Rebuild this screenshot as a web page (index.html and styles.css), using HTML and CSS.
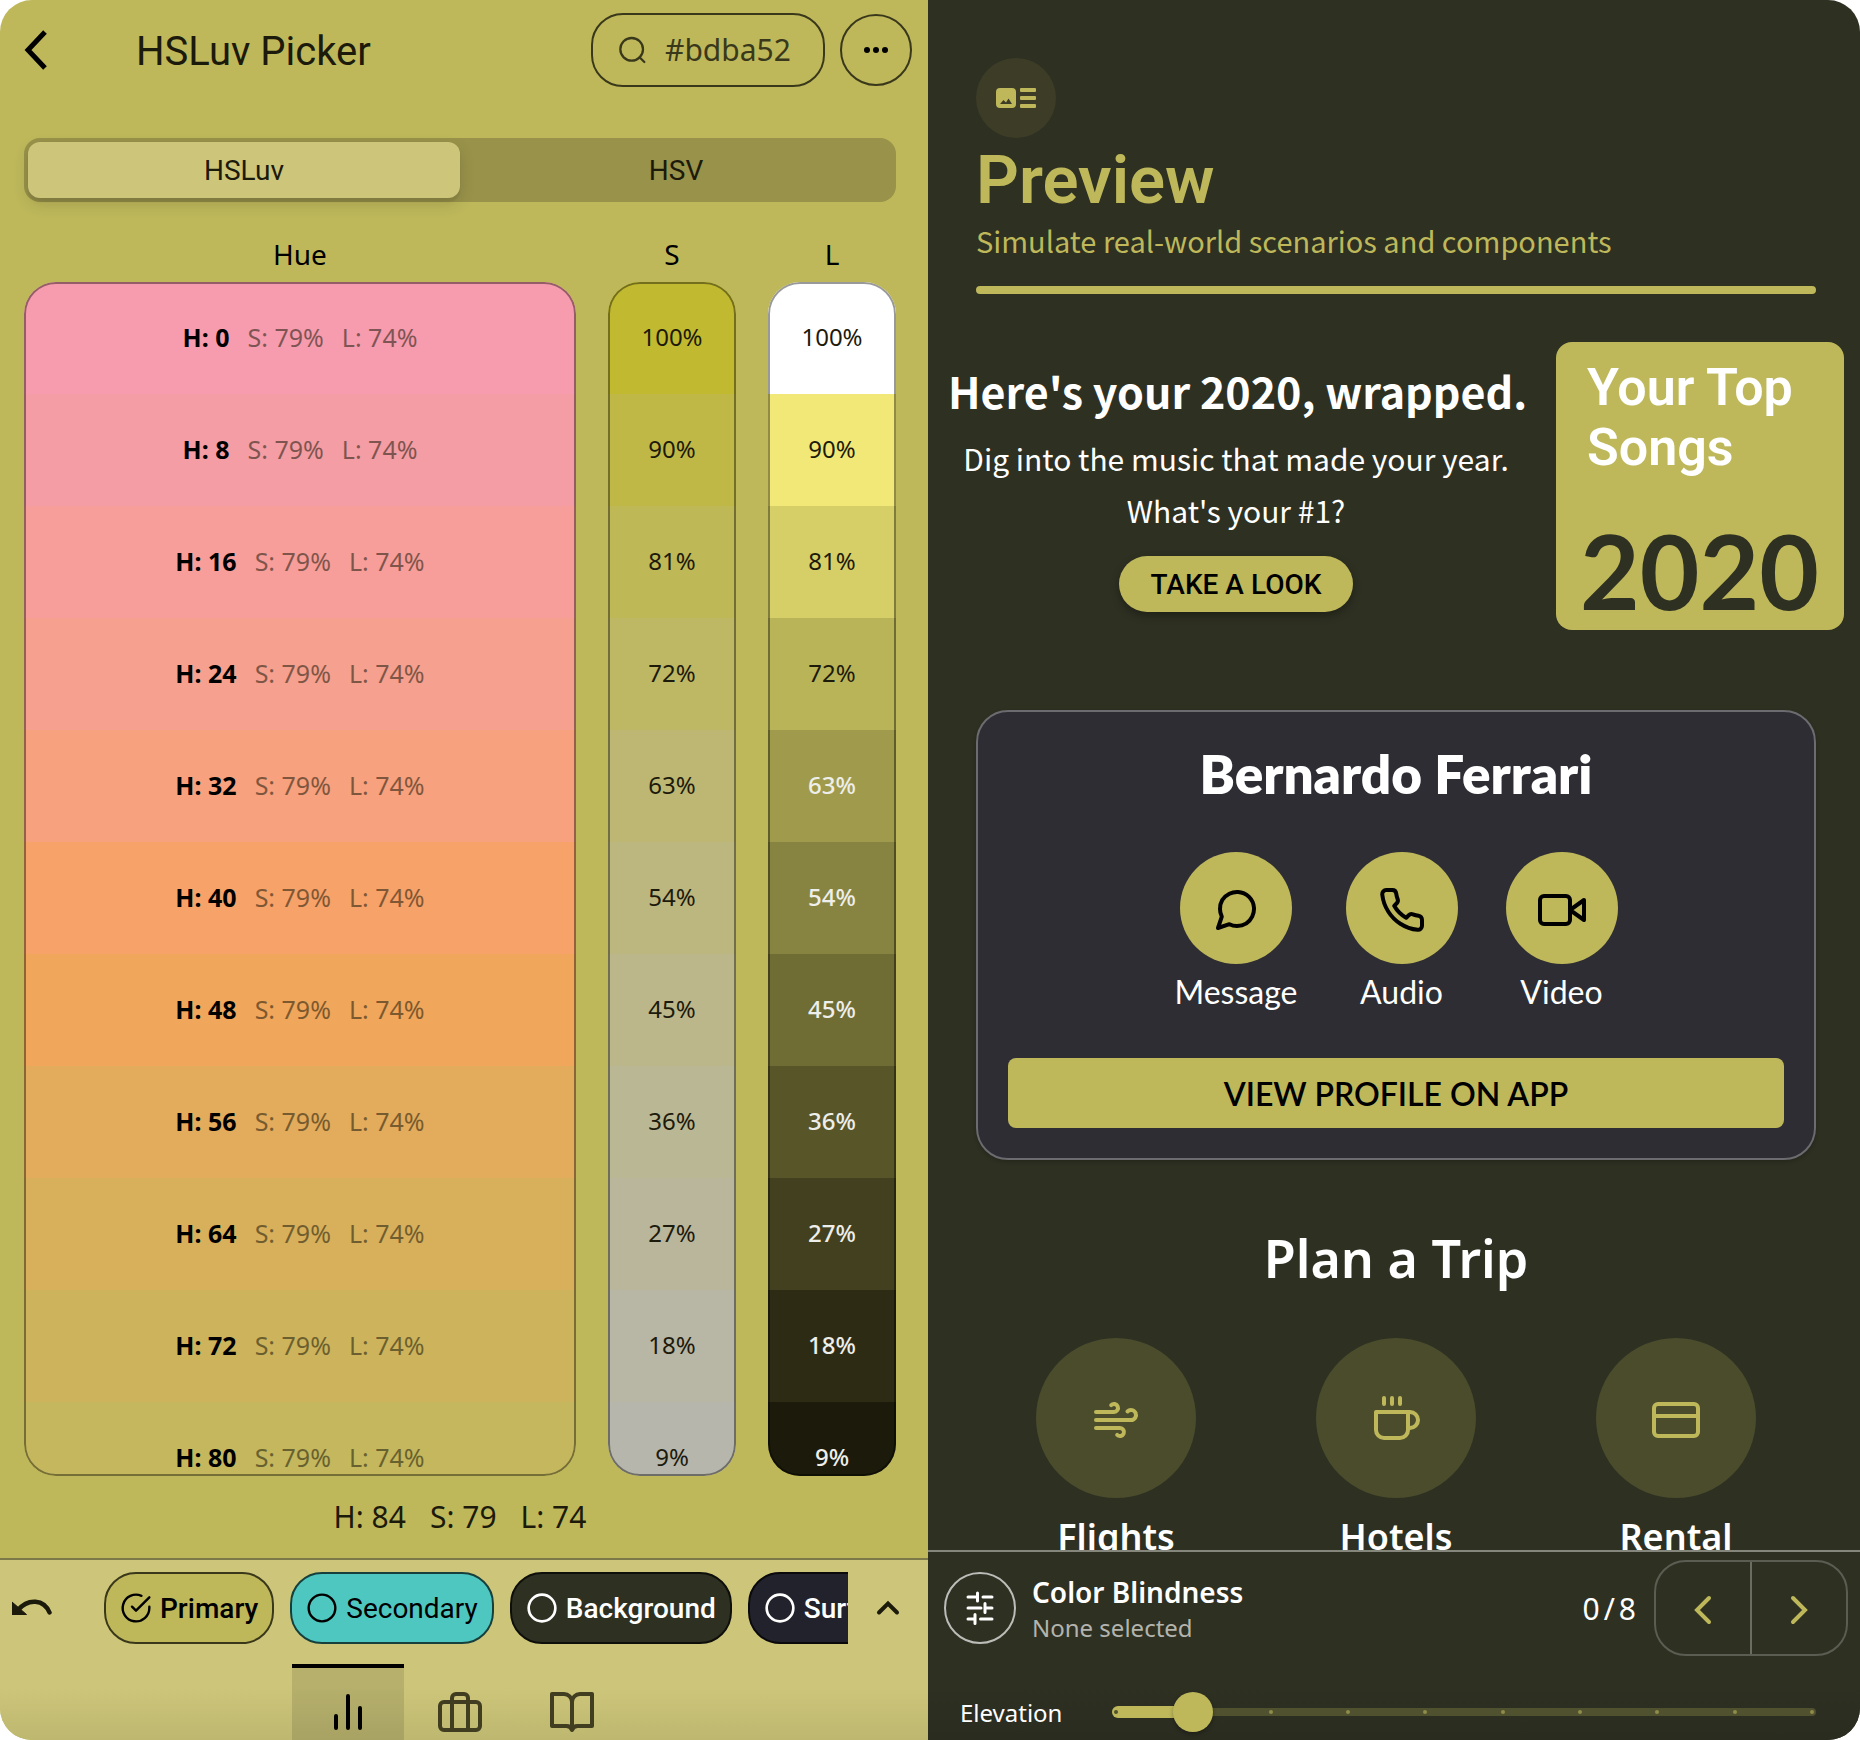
FILE: index.html
```html
<!DOCTYPE html>
<html lang="en">
<head>
<meta charset="utf-8">
<meta name="viewport" content="width=device-width, initial-scale=1">
<title>HSLuv Picker</title>
<link rel="stylesheet" href="styles.css">
</head>
<body>
<div class="app">
  <main class="picker">
    <header class="topbar">
      <button class="icon-btn back" aria-label="Back">
        <svg width="24" height="40" viewBox="0 0 24 40" fill="none" stroke="#000" stroke-width="5"><path d="M21 2 4 20l17 18"/></svg>
      </button>
      <h1 class="topbar-title">HSLuv Picker</h1>
      <label class="search">
        <svg width="32" height="32" viewBox="0 0 24 24" fill="none" stroke="currentColor" stroke-width="1.7" stroke-linecap="round"><circle cx="11" cy="11.500" r="8.500"/><path d="m20.500 21-3.600-3.600"/></svg>
        <input class="search-input" type="text" value="#bdba52" aria-label="Hex color">
      </label>
      <button class="more" aria-label="More options">
        <svg width="28" height="8" viewBox="0 0 28 8"><circle cx="5" cy="4" r="3"/><circle cx="14" cy="4" r="3"/><circle cx="23" cy="4" r="3"/></svg>
      </button>
    </header>

    <div class="segmented" role="tablist">
      <button class="segment is-active" role="tab" aria-selected="true">HSLuv</button>
      <button class="segment" role="tab" aria-selected="false">HSV</button>
    </div>

    <div class="sliders sliders-head">
      <h2 class="col-title">Hue</h2>
      <h2 class="col-title">S</h2>
      <h2 class="col-title">L</h2>
    </div>

    <div class="sliders sliders-body">
      <div class="swatches hue">
        <button class="swatch h0"><b>H: 0</b><span>S: 79%</span><span>L: 74%</span></button>
        <button class="swatch h8"><b>H: 8</b><span>S: 79%</span><span>L: 74%</span></button>
        <button class="swatch h16"><b>H: 16</b><span>S: 79%</span><span>L: 74%</span></button>
        <button class="swatch h24"><b>H: 24</b><span>S: 79%</span><span>L: 74%</span></button>
        <button class="swatch h32"><b>H: 32</b><span>S: 79%</span><span>L: 74%</span></button>
        <button class="swatch h40"><b>H: 40</b><span>S: 79%</span><span>L: 74%</span></button>
        <button class="swatch h48"><b>H: 48</b><span>S: 79%</span><span>L: 74%</span></button>
        <button class="swatch h56"><b>H: 56</b><span>S: 79%</span><span>L: 74%</span></button>
        <button class="swatch h64"><b>H: 64</b><span>S: 79%</span><span>L: 74%</span></button>
        <button class="swatch h72"><b>H: 72</b><span>S: 79%</span><span>L: 74%</span></button>
        <button class="swatch h80"><b>H: 80</b><span>S: 79%</span><span>L: 74%</span></button>
      </div>
      <div class="swatches">
        <button class="swatch s100">100%</button>
        <button class="swatch s90">90%</button>
        <button class="swatch s81">81%</button>
        <button class="swatch s72">72%</button>
        <button class="swatch s63">63%</button>
        <button class="swatch s54">54%</button>
        <button class="swatch s45">45%</button>
        <button class="swatch s36">36%</button>
        <button class="swatch s27">27%</button>
        <button class="swatch s18">18%</button>
        <button class="swatch s9">9%</button>
      </div>
      <div class="swatches">
        <button class="swatch l100">100%</button>
        <button class="swatch l90">90%</button>
        <button class="swatch l81">81%</button>
        <button class="swatch l72">72%</button>
        <button class="swatch on-dark l63">63%</button>
        <button class="swatch on-dark l54">54%</button>
        <button class="swatch on-dark l45">45%</button>
        <button class="swatch on-dark l36">36%</button>
        <button class="swatch on-dark l27">27%</button>
        <button class="swatch on-dark l18">18%</button>
        <button class="swatch on-dark l9">9%</button>
      </div>
    </div>

    <p class="readout"><span>H: 84</span><span>S: 79</span><span>L: 74</span></p>

    <footer class="dock">
      <div class="dock-row">
        <button class="icon-btn undo" aria-label="Undo">
          <svg width="40" height="18" viewBox="0 0 40 18"><path d="M0 3v12.500h14.500z" fill="#1c1a0b" stroke="#1c1a0b" stroke-linejoin="round"/><path d="M6 11C16-1 32 0 37.500 13.500" fill="none" stroke="#1c1a0b" stroke-width="4.500" stroke-linecap="round"/></svg>
        </button>
        <div class="chips">
          <button class="chip chip-primary" aria-pressed="true">
            <svg width="32" height="32" viewBox="0 0 24 24" fill="none" stroke="currentColor" stroke-width="1.800" stroke-linecap="round" stroke-linejoin="round"><path d="M22 11.100V12a10 10 0 1 1-5.900-9.100"/><path d="M22 4 12 14l-3-3"/></svg>
            Primary</button>
          <button class="chip chip-secondary">
            <svg width="32" height="32" viewBox="0 0 24 24" fill="none" stroke="currentColor" stroke-width="1.800"><circle cx="12" cy="12" r="10"/></svg>
            Secondary</button>
          <button class="chip chip-background">
            <svg width="32" height="32" viewBox="0 0 24 24" fill="none" stroke="currentColor" stroke-width="2"><circle cx="12" cy="12" r="10"/></svg>
            Background</button>
          <button class="chip chip-surface">
            <svg width="32" height="32" viewBox="0 0 24 24" fill="none" stroke="currentColor" stroke-width="2"><circle cx="12" cy="12" r="10"/></svg>
            Surface</button>
        </div>
        <button class="icon-btn expand" aria-label="Expand">
          <svg width="24" height="16" viewBox="0 0 24 16" fill="none" stroke="#1c1a0b" stroke-width="4" stroke-linecap="round" stroke-linejoin="miter"><path d="m3 12.500 9-9 9 9"/></svg>
        </button>
      </div>
      <nav class="tabs">
        <button class="tab is-active" aria-label="Picker">
          <svg width="48" height="48" viewBox="0 0 48 48" fill="none" stroke="#000" stroke-width="4" stroke-linecap="round"><path d="M12 28v12M24 8v32M36 20v20"/></svg>
        </button>
        <button class="tab" aria-label="Collection">
          <svg width="48" height="48" viewBox="0 0 48 48" fill="none" stroke="currentColor" stroke-width="4" stroke-linejoin="round"><rect x="4" y="14" width="40" height="28" rx="4"/><path d="M16 42V10a4 4 0 0 1 4-4h8a4 4 0 0 1 4 4v32"/></svg>
        </button>
        <button class="tab" aria-label="Guide">
          <svg width="48" height="48" viewBox="0 0 24 24" fill="none" stroke="currentColor" stroke-width="2" stroke-linecap="round" stroke-linejoin="round"><path d="M2 3h6a4 4 0 0 1 4 4v14a3 3 0 0 0-3-2H2zM22 3h-6a4 4 0 0 0-4 4v14a3 3 0 0 1 3-2h7z"/></svg>
        </button>
      </nav>
    </footer>
  </main>

  <section class="preview">
    <div class="preview-scroll">
      <header class="preview-head">
        <div class="badge">
          <svg width="40" height="20" viewBox="0 0 40 20" fill="#beb85b"><path fill-rule="evenodd" d="M4 0h12a4 4 0 0 1 4 4v12a4 4 0 0 1-4 4H4a4 4 0 0 1-4-4V4a4 4 0 0 1 4-4zm0 16h12l-3.500-5.500-2.500 4-2.500-2.500z"/><rect x="24" width="16" height="4" rx="1"/><rect x="24" y="8" width="16" height="4" rx="1"/><rect x="24" y="16" width="16" height="4" rx="1"/></svg>
        </div>
        <h2 class="preview-title">Preview</h2>
        <p class="preview-sub">Simulate real-world scenarios and components</p>
      </header>

      <article class="wrapped">
        <div class="wrapped-text">
          <h3 class="wrapped-title">Here's your 2020, wrapped.</h3>
          <p class="wrapped-copy">Dig into the music that made your year.<br>What's your #1?</p>
          <button class="pill">TAKE A LOOK</button>
        </div>
        <div class="cover">
          <p class="cover-title">Your Top Songs</p>
          <p class="cover-year">2020</p>
        </div>
      </article>

      <article class="profile">
        <h3 class="profile-name">Bernardo Ferrari</h3>
        <div class="contacts">
          <button class="contact"><span class="contact-icon"><svg width="48" height="48" viewBox="0 0 24 24" fill="none" stroke="#000" stroke-width="2" stroke-linecap="round" stroke-linejoin="round"><path d="M21 11.500a8.380 8.380 0 0 1-.9 3.800 8.500 8.500 0 0 1-7.600 4.700 8.380 8.380 0 0 1-3.800-.9L3 21l1.900-5.700a8.380 8.380 0 0 1-.9-3.800 8.500 8.500 0 0 1 4.700-7.600 8.380 8.380 0 0 1 3.800-.9h.5a8.480 8.480 0 0 1 8 8z"/></svg></span>Message</button>
          <button class="contact"><span class="contact-icon"><svg width="48" height="48" viewBox="0 0 24 24" fill="none" stroke="#000" stroke-width="2" stroke-linecap="round" stroke-linejoin="round"><path d="M22 16.920v3a2 2 0 0 1-2.180 2 19.790 19.790 0 0 1-8.630-3.070 19.500 19.500 0 0 1-6-6 19.790 19.790 0 0 1-3.070-8.670A2 2 0 0 1 4.110 2h3a2 2 0 0 1 2 1.720 12.840 12.840 0 0 0 .7 2.810 2 2 0 0 1-.45 2.110L8.090 9.910a16 16 0 0 0 6 6l1.270-1.270a2 2 0 0 1 2.110-.45 12.840 12.840 0 0 0 2.810.7A2 2 0 0 1 22 16.920z"/></svg></span>Audio</button>
          <button class="contact"><span class="contact-icon"><svg width="48" height="48" viewBox="0 0 24 24" fill="none" stroke="#000" stroke-width="2" stroke-linecap="round" stroke-linejoin="round"><path d="m23 7-7 5 7 5z"/><rect x="1" y="5" width="15" height="14" rx="2"/></svg></span>Video</button>
        </div>
        <button class="profile-btn">VIEW PROFILE ON APP</button>
      </article>

      <article class="trip">
        <h3 class="trip-title">Plan a Trip</h3>
        <div class="trip-grid">
          <button class="trip-item"><span class="trip-icon"><svg width="48" height="48" viewBox="0 0 24 24" fill="none" stroke="currentColor" stroke-width="2" stroke-linecap="round" stroke-linejoin="round"><path d="M9.590 4.590A2 2 0 1 1 11 8H2m10.590 11.410A2 2 0 1 0 14 16H2m15.730-8.270A2.500 2.500 0 1 1 19.500 12H2"/></svg></span>Flights</button>
          <button class="trip-item"><span class="trip-icon"><svg width="48" height="48" viewBox="0 0 24 24" fill="none" stroke="currentColor" stroke-width="2" stroke-linecap="round" stroke-linejoin="round"><path d="M18 8h1a4 4 0 0 1 0 8h-1M2 8h16v9a4 4 0 0 1-4 4H6a4 4 0 0 1-4-4zM6 1v3M10 1v3M14 1v3"/></svg></span>Hotels</button>
          <button class="trip-item"><span class="trip-icon"><svg width="48" height="48" viewBox="0 0 24 24" fill="none" stroke="currentColor" stroke-width="2" stroke-linecap="round" stroke-linejoin="round"><rect x="1" y="4" width="22" height="16" rx="2"/><path d="M1 10h22"/></svg></span>Rental</button>
        </div>
      </article>
    </div>

    <footer class="settings">
      <div class="settings-row">
        <button class="tune" aria-label="Color blindness options">
          <svg width="28" height="34" viewBox="0 0 28 34" fill="none" stroke="#fff" stroke-width="3" stroke-linecap="round"><path d="M2 6h8M17 6h9M11.500 2v8M2 17h13M20 17h6M19 12.500v9M2 28h7M14.500 28H26M9 23.500v9"/></svg>
        </button>
        <div class="settings-text">
          <h3 class="settings-title">Color Blindness</h3>
          <p class="settings-sub">None selected</p>
        </div>
        <p class="count"><span>0</span><span>/</span><span>8</span></p>
        <div class="stepper">
          <button class="step" aria-label="Previous"><svg width="20" height="32" viewBox="0 0 20 32" fill="none" stroke="currentColor" stroke-width="4" stroke-linecap="round"><path d="M16 4 4 16l12 12"/></svg></button>
          <button class="step" aria-label="Next"><svg width="20" height="32" viewBox="0 0 20 32" fill="none" stroke="currentColor" stroke-width="4" stroke-linecap="round"><path d="m4 4 12 12L4 28"/></svg></button>
        </div>
      </div>
      <div class="elevation">
        <label class="elevation-label" for="elevation">Elevation</label>
        <div class="range">
          <div class="range-track"><i></i><i></i><i></i><i></i><i></i><i></i><i></i><i></i><i></i><i></i></div>
          <div class="range-fill"><i></i></div>
          <input class="range-input" id="elevation" type="range" min="0" max="9" value="1">
        </div>
      </div>
    </footer>
  </section>
</div>
</body>
</html>
```
FILE: styles.css
```css
:root {
  --primary: #beb85b;
  --primary-light: #cdc67a;
  --ink: #1c1a0b;
  --background: #2e3022;
  --humanist: "Noto Sans", "Open Sans", sans-serif;
  --narrow: "Noto Sans CJK JP", "Noto Sans", sans-serif;
}

* { box-sizing: border-box; }

body {
  margin: 0;
  background: #fff;
  font-family: Roboto, sans-serif;
}

h1, h2, h3, p { margin: 0; font-weight: 400; }

button {
  margin: 0;
  padding: 0;
  border: 0;
  background: none;
  color: inherit;
  font: inherit;
  cursor: pointer;
}

svg { display: block; flex: none; }

.app {
  display: grid;
  grid-template-columns: minmax(0, 928fr) minmax(0, 932fr);
  height: 100vh;
  border-radius: 32px;
  overflow: hidden;
}

/* Picker */
.picker {
  display: flex;
  flex-direction: column;
  min-height: 0;
  background: var(--primary);
  color: var(--ink);
}

.topbar {
  display: flex;
  align-items: center;
  height: 100px;
  padding: 0 16px 0 24px;
}

.icon-btn { flex: none; }
.back { width: 112px; }

.topbar-title {
  flex: 1;
  padding-top: 4px;
  font-size: 40px;
  line-height: 48px;
}

.search {
  display: flex;
  align-items: center;
  gap: 16px;
  height: 74px;
  padding: 0 30px 0 24px;
  border: 2px solid #3a381b;
  border-radius: 32px;
  color: #3a381b;
}

.search-input {
  width: 128px;
  padding: 0;
  border: 0;
  outline: 0;
  background: none;
  color: inherit;
  font: 30px/40px var(--humanist);
}

.more {
  display: grid;
  place-items: center;
  width: 72px;
  height: 72px;
  margin-left: 15px;
  border: 2px solid #3a381b;
  border-radius: 50%;
}

.segmented {
  display: grid;
  grid-template-columns: 1fr 1fr;
  height: 64px;
  margin: 38px 32px 0 24px;
  padding: 4px;
  border-radius: 16px;
  background: #98924a;
}

.segment {
  border-radius: 12px;
  font-size: 28px;
}

.segment.is-active {
  background: var(--primary-light);
  box-shadow: 0 6px 16px rgba(0, 0, 0, .14), 0 4px 2px rgba(0, 0, 0, .06);
}

.sliders {
  display: grid;
  grid-template-columns: minmax(0, 1fr) 128px 128px;
  gap: 32px;
  padding: 0 32px 0 24px;
}

.sliders-head { margin-top: 24px; }

.col-title {
  color: #000;
  font: 28px/56px var(--humanist);
  text-align: center;
}

.sliders-body {
  flex: 1;
  grid-template-rows: minmax(0, 1fr);
  min-height: 0;
}

.swatches {
  position: relative;
  display: flex;
  flex-direction: column;
  border-radius: 32px;
  overflow: hidden;
}

/* translucent outline over the swatches */
.swatches::after {
  content: "";
  position: absolute;
  inset: 0;
  border: 2px solid rgba(0, 0, 0, .4);
  border-radius: 32px;
  pointer-events: none;
}

.swatch {
  display: flex;
  flex: none;
  align-items: center;
  justify-content: center;
  gap: 18px;
  height: 112px;
  padding-bottom: 2px;
  font: 24px/32px var(--humanist);
}

.hue .swatch { font-size: 25px; }
.swatch b { color: #000; }
.swatch span { opacity: .55; }
.on-dark { color: #eeeeea; font-weight: 500; }

.h0 { background: #f79cae; }
.h8 { background: #f59da4; }
.h16 { background: #f79e9a; }
.h24 { background: #f6a08f; }
.h32 { background: #f7a17e; }
.h40 { background: #f7a269; }
.h48 { background: #f0a65b; }
.h56 { background: #e3ab5c; }
.h64 { background: #d8b05c; }
.h72 { background: #cdb45c; }
.h80 { background: #c4b75d; }

.s100 { background: #c1b92f; }
.s90 { background: #c0b846; }
.s81 { background: #beb857; }
.s72 { background: #beb865; }
.s63 { background: #bdb773; }
.s54 { background: #bcb77e; }
.s45 { background: #bbb78a; }
.s36 { background: #bab794; }
.s27 { background: #b9b69c; }
.s18 { background: #b8b6a5; }
.s9 { background: #b7b6ad; }

.l100 { background: #fff; }
.l90 { background: #f1e877; }
.l81 { background: #d6cf68; }
.l72 { background: #bab459; }
.l63 { background: #a09b4c; }
.l54 { background: #878340; }
.l45 { background: #6f6c34; }
.l36 { background: #585629; }
.l27 { background: #42401e; }
.l18 { background: #2e2b14; }
.l9 { background: #1c1a0b; }

.readout {
  display: flex;
  align-items: center;
  justify-content: center;
  gap: 24px;
  height: 82px;
  padding-right: 8px;
  font: 30px/40px var(--humanist);
}

.dock {
  border-top: 2px solid #7d7848;
  padding: 12px 8px 0 0;
  background: linear-gradient(var(--primary-light) 70%, #bdb770);
}

.dock-row { display: flex; align-items: center; }

.undo {
  display: grid;
  place-items: center;
  width: 64px;
  height: 72px;
}

.chips {
  display: flex;
  flex: 1;
  gap: 16px;
  min-width: 0;
  margin-left: 40px;
  overflow: hidden;
}

.chip {
  display: flex;
  flex: none;
  align-items: center;
  gap: 8px;
  height: 72px;
  padding: 0 14px;
  border: 2px solid #3a381b;
  border-radius: 32px;
  color: #000;
  font-size: 28px;
}

.chip-primary { background: var(--primary); font-weight: 500; }
.chip-secondary { border-color: #17403d; background: #4ec7c0; }
.chip-background { border-color: #0e0f0a; background: #2e3022; color: #fff; font-weight: 500; }
.chip-surface { border-color: #0a0a0d; background: #22222c; color: #fff; font-weight: 500; }

.expand {
  display: grid;
  place-items: center;
  width: 72px;
  height: 72px;
  margin-left: 4px;
  margin-right: -4px;
}

.tabs {
  display: flex;
  justify-content: center;
  margin-top: 20px;
}

.tab {
  width: 112px;
  height: 76px;
  padding: 24px 32px 4px;
  color: #403d21;
}

.tab.is-active {
  padding-top: 20px;
  border-top: 4px solid #000;
  background: rgba(0, 0, 0, .11);
}

/* Preview */
.preview {
  display: flex;
  flex-direction: column;
  min-height: 0;
  background: var(--background);
  color: #fff;
}

.preview-scroll {
  flex: 1;
  min-height: 0;
  overflow: hidden;
}

.preview-head {
  margin: 0 44px 0 48px;
  padding: 58px 0 24px;
  color: var(--primary);
}

.preview-head::after {
  content: "";
  display: block;
  height: 8px;
  margin-top: 26px;
  border-radius: 4px;
  background: var(--primary);
}

.badge {
  display: grid;
  place-items: center;
  width: 80px;
  height: 80px;
  border-radius: 50%;
  background: #3d3d27;
}

.preview-title {
  padding-top: 2px;
  font-size: 67px;
  font-weight: 600;
  line-height: 80px;
}

.preview-sub { font: 29px/40px var(--narrow); }

.wrapped {
  display: flex;
  align-items: center;
  gap: 32px;
  margin-top: 24px;
  padding: 0 16px 0 20px;
}

.wrapped-text {
  flex: 1;
  min-width: 0;
  text-align: center;
  white-space: nowrap;
}

.wrapped-title { font: 600 43px/60px var(--narrow); }

.wrapped-copy {
  margin: 12px 0 20px;
  font: 30px/52px var(--narrow);
}

.pill {
  height: 56px;
  padding: 0 32px;
  border-radius: 28px;
  background: var(--primary);
  box-shadow: 0 4px 8px rgba(0, 0, 0, .3);
  color: #000;
  font-size: 28px;
  font-weight: 500;
}

.cover {
  display: flex;
  flex: none;
  flex-direction: column;
  justify-content: space-between;
  width: 288px;
  height: 288px;
  padding: 16px 24px 0;
  border-radius: 16px;
  background: var(--primary);
}

.cover-title {
  padding-left: 7px;
  font-size: 52px;
  font-weight: 600;
  line-height: 60px;
}

.cover-year {
  color: var(--background);
  font: 700 103px/120px Lato, sans-serif;
}

.profile {
  display: flex;
  flex-direction: column;
  margin: 80px 44px 0 48px;
  padding: 30px;
  border: 2px solid #6b6b70;
  border-radius: 32px;
  background: #2d2d33;
  box-shadow: 0 2px 4px rgba(0, 0, 0, .2);
  font-family: Lato, sans-serif;
  text-align: center;
}

.profile-name {
  font-size: 53px;
  font-weight: 800;
  line-height: 64px;
}

.contacts {
  display: flex;
  justify-content: center;
  gap: 48px;
  margin: 46px 0;
}

.contact {
  display: flex;
  flex-direction: column;
  align-items: center;
  gap: 8px;
  font-size: 32px;
  line-height: 40px;
}

.contact-icon {
  display: grid;
  place-items: center;
  width: 112px;
  height: 112px;
  padding-top: 4px;
  border-radius: 50%;
  background: var(--primary);
}

.profile-btn {
  height: 70px;
  border-radius: 8px;
  background: var(--primary);
  color: #000;
  font-size: 32px;
  font-weight: 600;
}

.trip {
  margin: 66px 44px 0 48px;
  font-family: var(--humanist);
  font-weight: 600;
}

.trip-title {
  font-size: 52px;
  font-weight: 600;
  line-height: 64px;
  text-align: center;
}

.trip-grid {
  display: grid;
  grid-template-columns: repeat(3, 1fr);
  margin-top: 48px;
}

.trip-item {
  display: flex;
  flex-direction: column;
  align-items: center;
  gap: 15px;
  font-size: 36px;
  line-height: 48px;
}

.trip-icon {
  display: grid;
  place-items: center;
  width: 160px;
  height: 160px;
  padding-top: 4px;
  border-radius: 50%;
  background: #4b4c2c;
  color: var(--primary);
}

.settings {
  border-top: 2px solid #85867c;
  padding: 8px 12px 0 16px;
  background: linear-gradient(var(--background) 70%, #2a2c20);
  font-family: var(--humanist);
}

.settings-row { display: flex; align-items: center; }

.tune {
  display: grid;
  place-items: center;
  width: 72px;
  height: 72px;
  border: 2px solid #bcbdb8;
  border-radius: 50%;
}

.settings-text { flex: 1; margin-left: 16px; }

.settings-title {
  font-size: 28px;
  font-weight: 600;
  line-height: 40px;
}

.settings-sub {
  color: #b3b4ae;
  font-size: 24px;
  line-height: 32px;
}

.count {
  display: flex;
  gap: 4px;
  margin-right: 18px;
  font-size: 30px;
}

.stepper {
  display: flex;
  width: 194px;
  height: 96px;
  border: 2px solid #5b5d53;
  border-radius: 32px;
  color: var(--primary);
}

.step {
  display: grid;
  flex: 1;
  place-items: center;
  padding-top: 4px;
}

.step + .step { border-left: 2px solid #6b6c62; }

.elevation {
  display: grid;
  grid-template-columns: 136px minmax(0, 1fr);
  align-items: center;
  height: 56px;
  margin-top: 28px;
  padding: 0 16px;
}

.elevation-label { font-size: 24px; }

/* track, fill and thumb share one grid cell */
.range {
  display: grid;
  align-items: center;
}

.range > * { grid-area: 1 / 1; }

.range-track, .range-fill {
  display: flex;
  align-items: center;
  justify-content: space-between;
  margin: 0 16px;
  border-radius: 6px;
}

.range-track {
  height: 8px;
  padding: 0 2px;
  background: #50512f;
}

.range-fill {
  width: 11%;
  height: 12px;
  padding: 0 2px;
  background: var(--primary);
}

.range i {
  width: 4px;
  height: 4px;
  border-radius: 50%;
  background: #8f8c49;
}

.range .range-fill i { background: #50512f; }

.range-input {
  width: 100%;
  height: 40px;
  margin: 0;
  appearance: none;
  background: none;
}

.range-input::-webkit-slider-thumb {
  appearance: none;
  width: 40px;
  height: 40px;
  border-radius: 50%;
  background: var(--primary);
  box-shadow: 0 2px 4px rgba(0, 0, 0, .3);
}
```
